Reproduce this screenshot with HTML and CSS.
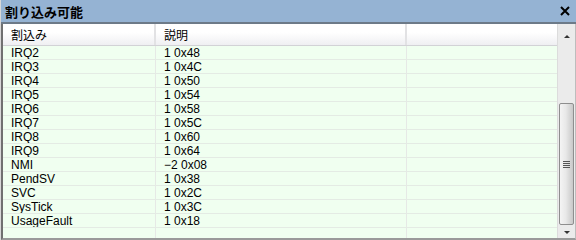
FILE: index.html
```html
<!DOCTYPE html>
<html lang="ja">
<head>
    <meta charset="UTF-8">
    <title>割り込み可能</title>
    <link rel="stylesheet" href="styles.css">
</head>
<body>
    <div class="panel">
        <div class="titlebar">
            <span class="title">割り込み可能</span>
            <svg class="close" width="10" height="10" viewBox="0 0 10 10">
                <path d="M1 1 L9 9 M9 1 L1 9" stroke="#000" stroke-width="2" fill="none"/>
            </svg>
        </div>
        <div class="content">
            <div class="list">
                <div class="row head">
                    <div class="cell">割込み</div>
                    <div class="cell">説明</div>
                    <div class="cell"></div>
                </div>
                <div class="row"><div class="cell">IRQ2</div><div class="cell">1 0x48</div><div class="cell"></div></div>
                <div class="row"><div class="cell">IRQ3</div><div class="cell">1 0x4C</div><div class="cell"></div></div>
                <div class="row"><div class="cell">IRQ4</div><div class="cell">1 0x50</div><div class="cell"></div></div>
                <div class="row"><div class="cell">IRQ5</div><div class="cell">1 0x54</div><div class="cell"></div></div>
                <div class="row"><div class="cell">IRQ6</div><div class="cell">1 0x58</div><div class="cell"></div></div>
                <div class="row"><div class="cell">IRQ7</div><div class="cell">1 0x5C</div><div class="cell"></div></div>
                <div class="row"><div class="cell">IRQ8</div><div class="cell">1 0x60</div><div class="cell"></div></div>
                <div class="row"><div class="cell">IRQ9</div><div class="cell">1 0x64</div><div class="cell"></div></div>
                <div class="row"><div class="cell">NMI</div><div class="cell">−2 0x08</div><div class="cell"></div></div>
                <div class="row"><div class="cell">PendSV</div><div class="cell">1 0x38</div><div class="cell"></div></div>
                <div class="row"><div class="cell">SVC</div><div class="cell">1 0x2C</div><div class="cell"></div></div>
                <div class="row"><div class="cell">SysTick</div><div class="cell">1 0x3C</div><div class="cell"></div></div>
                <div class="row"><div class="cell">UsageFault</div><div class="cell">1 0x18</div><div class="cell"></div></div>
                <div class="row"><div class="cell"></div><div class="cell"></div><div class="cell"></div></div>
            </div>
            <div class="scrollbar">
                <div class="arrow up"></div>
                <div class="track">
                    <div class="thumb"><span class="grip"></span></div>
                </div>
                <div class="arrow down"></div>
            </div>
        </div>
    </div>
</body>
</html>
```
FILE: styles.css
```css
html, body {
    margin: 0;
    padding: 0;
    background: #f0f0f0;
}
body {
    font-family: "Liberation Sans", "Noto Sans CJK JP", sans-serif;
    font-size: 12px;
    color: #000;
}
.panel {
    width: 576px;
    height: 240px;
    box-sizing: border-box;
    border-left: 1px solid #d8d8d8;
    display: flex;
    flex-direction: column;
    overflow: hidden;
}
.titlebar {
    height: 22px;
    background: #95b3d3;
    border-bottom: 2px solid #6d7a88;
    display: flex;
    align-items: center;
    justify-content: space-between;
    padding: 0 6px 0 4px;
    flex-shrink: 0;
}
.title {
    font-family: "Noto Sans CJK JP", sans-serif;
    font-weight: bold;
    font-size: 13px;
}
.content {
    display: flex;
    height: 214px;
    border-left: 2px solid #707070;
    border-bottom: 2px solid #9a9a9a;
    border-right: 1px solid #bdbdbd;
}
.list {
    flex: 1;
    background: #f0fff0;
    overflow: hidden;
}
.row {
    display: grid;
    grid-template-columns: 153px 251px 1fr;
    height: 13px;
    border-bottom: 1px solid #e4ebe4;
}
.row .cell {
    padding-left: 8px;
    line-height: 14px;
    border-right: 1px solid #e6e9e6;
    white-space: nowrap;
    overflow: hidden;
}
.row .cell:last-child {
    border-right: none;
}
.head {
    height: 21px;
    background: linear-gradient(#ffffff 0%, #ffffff 40%, #efeff2 100%);
    border-bottom: 1px solid #d2d2d6;
}
.head .cell {
    line-height: 21px;
    font-family: "Noto Sans CJK JP", sans-serif;
    border-right: 2px solid #e2e2e4;
}
.scrollbar {
    width: 17px;
    background: #ebebeb;
    display: flex;
    flex-direction: column;
    border-left: 1px solid #dcdcdc;
}
.arrow {
    display: flex;
    align-items: center;
    justify-content: center;
}
.arrow::before {
    content: "";
    border-left: 3px solid transparent;
    border-right: 3px solid transparent;
}
.arrow.up::before {
    border-bottom: 3px solid #333;
}
.arrow.down::before {
    border-top: 3px solid #333;
}
.arrow.up {
    height: 24px;
}
.arrow.down {
    height: 11px;
}
.track {
    flex: 1;
    display: flex;
    flex-direction: column;
    justify-content: flex-end;
    padding: 0 1px 2px 1px;
}
.thumb {
    height: 122px;
    box-sizing: border-box;
    border: 1px solid #8e8e8e;
    border-radius: 2px;
    background: linear-gradient(to right, #f4f4f4 0%, #e8e8e8 45%, #c8c8c8 100%);
    display: flex;
    align-items: center;
    justify-content: center;
}
.grip {
    width: 7px;
    height: 7px;
    background: repeating-linear-gradient(#555 0 1px, transparent 1px 2px);
}
```
